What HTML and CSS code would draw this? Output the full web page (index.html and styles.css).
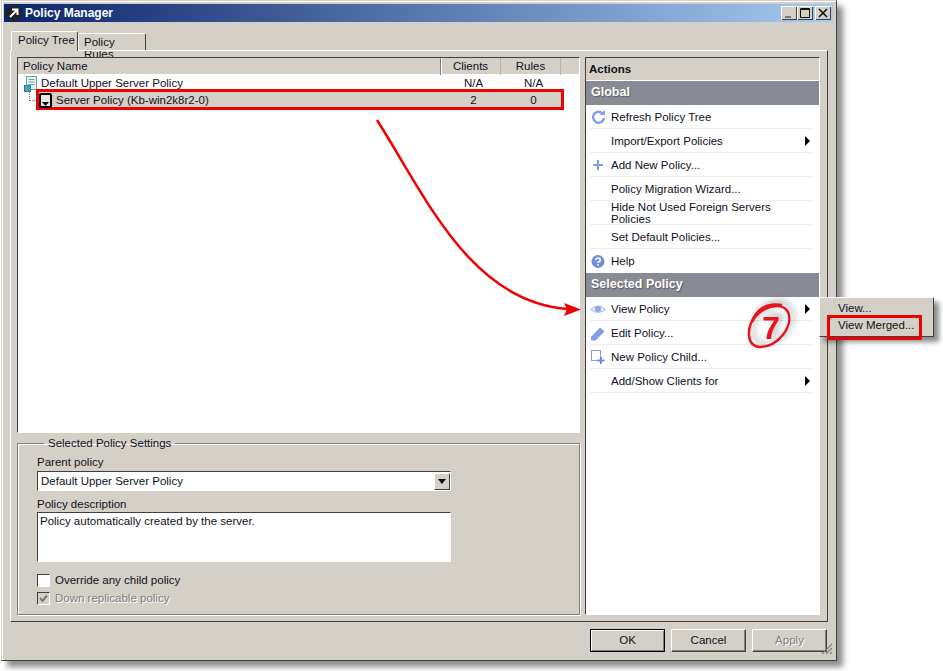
FILE: index.html
```html
<!DOCTYPE html>
<html lang="en">
<head>
    <meta charset="UTF-8">
    <title>Policy Manager</title>
    <link rel="stylesheet" href="styles.css">
</head>
<body>
    <div class="window">
        <!-- Title bar -->
        <div class="titlebar">
            <svg class="title-icon" width="16" height="16" viewBox="0 0 16 16">
                <circle cx="8" cy="8" r="7.5" fill="#222"/>
                <path d="M4 12 L10.5 5.5 M6 4.5 H11.5 V10" fill="none" stroke="#fff" stroke-width="2"/>
            </svg>
            <span class="title-text">Policy Manager</span>
            <div class="title-buttons">
                <div class="title-btn"><svg width="16" height="14" viewBox="0 0 16 14"><rect x="4" y="10" width="6" height="2" fill="#777"/></svg></div>
                <div class="title-btn"><svg width="16" height="14" viewBox="0 0 16 14"><path d="M3.5 2.5 H12.5 V11.5 H3.5 Z M3.5 3.5 H12.5" fill="none" stroke="#111"/></svg></div>
                <div class="title-btn"><svg width="16" height="14" viewBox="0 0 16 14"><path d="M4 3 L12 11 M12 3 L4 11" fill="none" stroke="#111" stroke-width="1.6"/></svg></div>
            </div>
        </div>

        <!-- Tabs -->
        <div class="tabs">
            <div class="tab active">Policy Tree</div>
            <div class="tab">Policy Rules</div>
        </div>

        <div class="tab-panel">
            <div class="left-col">
                <div class="tree">
                    <div class="tree-head">
                        <div class="col-name">Policy Name</div>
                        <div class="col-num">Clients</div>
                        <div class="col-num">Rules</div>
                    </div>
                    <div class="tree-row">
                        <svg class="doc-icon" width="14" height="16" viewBox="0 0 14 16">
                            <rect x="2.5" y="0.5" width="10" height="13" fill="#e6f2f2" stroke="#6aa5a8"/>
                            <path d="M4.5 3.5 H10.5 M4.5 6 H10.5 M4.5 8.5 H10.5" stroke="#6aa5a8"/>
                            <rect x="0.5" y="9.5" width="6" height="6" fill="#4f9fb5" stroke="#2d7f94"/>
                        </svg>
                        <div class="col-name row-name">Default Upper Server Policy</div>
                        <div class="col-num">N/A</div>
                        <div class="col-num">N/A</div>
                    </div>
                    <div class="tree-row child">
                        <div class="tree-dots"></div>
                        <svg class="srv-icon" width="13" height="15" viewBox="0 0 13 15">
                            <rect width="13" height="15" rx="2" fill="#000"/>
                            <rect x="2" y="2" width="9" height="11" fill="#e8e8e8"/>
                            <path d="M3 9 H10 L6.5 13 Z" fill="#000"/>
                        </svg>
                        <div class="child-cells">
                            <div class="col-name child-name">Server Policy (Kb-win2k8r2-0)</div>
                            <div class="col-num">2</div>
                            <div class="col-num">0</div>
                        </div>
                    </div>
                </div>

                <fieldset class="settings">
                    <legend>Selected Policy Settings</legend>
                    <div class="field-label first">Parent policy</div>
                    <div class="combo">
                        <span>Default Upper Server Policy</span>
                        <div class="combo-btn"><svg width="8" height="5" viewBox="0 0 8 5"><path d="M0 0 H8 L4 5 Z" fill="#000"/></svg></div>
                    </div>
                    <div class="field-label">Policy description</div>
                    <div class="memo">Policy automatically created by the server.</div>
                    <div class="check-row">
                        <div class="check"></div>
                        <span>Override any child policy</span>
                    </div>
                    <div class="check-row disabled">
                        <div class="check"><svg width="11" height="11" viewBox="0 0 11 11"><path d="M2 5 L4.5 8 L9 2.5" fill="none" stroke="#777" stroke-width="2"/></svg></div>
                        <span>Down replicable policy</span>
                    </div>
                </fieldset>
            </div>

            <!-- Actions pane -->
            <div class="actions">
                <div class="actions-head">Actions</div>
                <div class="band">Global</div>
                <div class="item">
                    <svg class="item-icon" width="16" height="16" viewBox="0 0 16 16"><path d="M13 5 A5.5 5.5 0 1 0 14 9" fill="none" stroke="#7f9fe8" stroke-width="2.4"/><path d="M9.5 6 H15 V1 Z" fill="#7f9fe8"/></svg>
                    <span>Refresh Policy Tree</span>
                </div>
                <div class="item"><span>Import/Export Policies</span><div class="sub-arrow"></div></div>
                <div class="item">
                    <svg class="item-icon" width="16" height="16" viewBox="0 0 16 16"><path d="M8 3 V13 M3 8 H13" stroke="#7f9fe8" stroke-width="2"/></svg>
                    <span>Add New Policy...</span>
                </div>
                <div class="item"><span>Policy Migration Wizard...</span></div>
                <div class="item"><span>Hide Not Used Foreign Servers Policies</span></div>
                <div class="item"><span>Set Default Policies...</span></div>
                <div class="item last">
                    <svg class="item-icon" width="16" height="16" viewBox="0 0 16 16"><circle cx="8" cy="8.5" r="6.5" fill="#6f8fe0"/><path d="M5.8 7 A2.2 2 0 1 1 8 9 V10" fill="none" stroke="#fff" stroke-width="1.6"/><rect x="7.2" y="11" width="1.6" height="1.6" fill="#fff"/></svg>
                    <span>Help</span>
                </div>
                <div class="band">Selected Policy</div>
                <div class="item">
                    <svg class="item-icon" width="16" height="16" viewBox="0 0 16 16"><path d="M0.5 8.5 Q8 1.5 15.5 8.5 Q8 14.5 0.5 8.5 Z" fill="#dfe6fa" stroke="#a9bcf0"/><circle cx="8" cy="8" r="3" fill="#8ea6e8"/></svg>
                    <span>View Policy</span><div class="sub-arrow"></div>
                </div>
                <div class="item">
                    <svg class="item-icon" width="16" height="16" viewBox="0 0 16 16"><path d="M1 12 L10 2.5 L14.5 6.5 L5.5 15.5 H1 Z" fill="#7f9fe8"/></svg>
                    <span>Edit Policy...</span>
                </div>
                <div class="item">
                    <svg class="item-icon" width="16" height="16" viewBox="0 0 16 16"><rect x="1.5" y="1.5" width="9" height="10" fill="#fff" stroke="#8a9cc8"/><path d="M11 8 V15 M7.5 11.5 H14.5" stroke="#6f8fe0" stroke-width="2"/></svg>
                    <span>New Policy Child...</span>
                </div>
                <div class="item"><span>Add/Show Clients for</span><div class="sub-arrow"></div></div>
            </div>
        </div>

        <div class="footer">
            <div class="btn default">OK</div>
            <div class="btn">Cancel</div>
            <div class="btn disabled">Apply</div>
            <svg class="grip" width="13" height="13" viewBox="0 0 13 13"><path d="M12 2 L2 12 M12 6 L6 12 M12 10 L10 12" stroke="#808080" stroke-width="1.2"/></svg>
        </div>
    </div>

    <!-- Popup submenu -->
    <div class="popup">
        <div class="popup-item">View...</div>
        <div class="popup-item">View Merged...</div>
    </div>

    <!-- Annotations drawn over the screenshot -->
    <div class="mark mark-row"></div>
    <div class="mark mark-menu"></div>
    <svg class="annot" width="943" height="671" viewBox="0 0 943 671">
        <path d="M377 120 C425 195 470 302 568 309" fill="none" stroke="#f00000" stroke-width="2.5"/>
        <path d="M581 309.5 L564 303 L567 309 L564 316 Z" fill="#f00000"/>
        <g class="seven">
            <path d="M752 322 C760 306 782 301 788 312 C794 326 778 347 760 347 C746 346 746 328 756 314 C762 306 772 303 782 305" fill="none" stroke="#e8141c" stroke-width="2.5"/>
            <text x="771" y="339" class="seven-text">7</text>
        </g>
    </svg>
</body>
</html>
```

FILE: styles.css
```css
body {
    margin: 0;
    background: #fff;
    font-family: "Liberation Sans", Arial, sans-serif;
    font-size: 11.5px;
    color: #10101c;
    width: 943px;
    height: 671px;
    position: relative;
    overflow: hidden;
}

.window {
    box-sizing: border-box;
    width: 836px;
    height: 661px;
    margin-left: 1px;
    padding: 3px 3px 0 2px;
    background: #d4d0c8;
    border: 1px solid #d4d0c8;
    border-right-color: #404040;
    border-bottom-color: #404040;
    box-shadow: inset 1px 1px 0 #fff, 6px 6px 6px rgba(0, 0, 0, 0.45);
    display: flex;
    flex-direction: column;
}

/* Title bar */
.titlebar {
    height: 18px;
    flex: none;
    display: flex;
    align-items: center;
    padding: 0 2px;
    background: linear-gradient(90deg, #0a246a, #a6caf0);
    color: #fff;
}

.title-icon {
    margin-right: 3px;
}

.title-text {
    font-weight: bold;
    font-size: 12px;
}

.title-buttons {
    margin-left: auto;
    display: flex;
}

.title-btn {
    box-sizing: border-box;
    width: 16px;
    height: 14px;
    background: #d4d0c8;
    box-shadow: inset 1px 1px 0 #fff, inset -1px -1px 0 #404040;
    display: flex;
}

.title-btn:last-child {
    margin-left: 2px;
}

/* Tabs */
.tabs {
    display: flex;
    align-items: flex-end;
    height: 20px;
    margin: 8px 0 0 7px;
    flex: none;
}

.tab {
    box-sizing: border-box;
    height: 17px;
    width: 68px;
    padding: 2px 0 0 5px;
    border: 1px solid #fff;
    border-bottom: none;
    border-right-color: #404040;
    border-radius: 2px 2px 0 0;
}

.tab.active {
    height: 20px;
    width: 67px;
    padding: 2px 0 0 6px;
    position: relative;
    z-index: 1;
    margin-bottom: -1px;
    background: #d4d0c8;
}

.tab-panel {
    box-sizing: border-box;
    height: 572px;
    margin-left: 6px;
    width: 818px;
    flex: none;
    padding: 6px 7px 6px 6px;
    border: 1px solid #fff;
    border-right-color: #404040;
    border-bottom-color: #404040;
    display: flex;
    gap: 5px;
}

.left-col {
    width: 563px;
    display: flex;
    flex-direction: column;
}

/* Policy tree list */
.tree {
    box-sizing: border-box;
    height: 376px;
    flex: none;
    background: #fff;
    border: 1px solid #fff;
    border-top-color: #404040;
    border-left-color: #404040;
}

.tree-head {
    display: flex;
    height: 17px;
    line-height: 16px;
    background: #d4d0c8;
    box-shadow: inset 0 -1px 0 #fff;
    padding-right: 18px;
    border-right: 0;
}

.tree-head .col-name {
    width: 417px;
    padding-left: 5px;
    border-right: 1px solid #808080;
    box-shadow: 1px 0 0 #fff;
}

.col-num {
    width: 59px;
    flex: none;
    text-align: center;
    border-right: 1px solid #b8b4ac;
}

.tree-row .col-num,
.child-cells .col-num {
    border-right-color: transparent;
}

.tree-row {
    display: flex;
    align-items: center;
    height: 17px;
    line-height: 17px;
}

.doc-icon {
    margin-left: 6px;
    flex: none;
}

.row-name {
    width: 403px;
    padding-left: 3px;
}

.tree-row.child {
    position: relative;
}

.tree-dots {
    width: 9px;
    height: 8px;
    margin: -8px 0 0 11px;
    flex: none;
    border-left: 1px dotted #777;
    border-bottom: 1px dotted #777;
}

.srv-icon {
    margin-left: 0;
    flex: none;
    position: relative;
    z-index: 1;
}

.child-cells {
    display: flex;
    flex: 1;
    margin-left: -13px;
    margin-right: 18px;
    background: #d4d0c8;
}

.child-name {
    width: 388px;
    padding-left: 17px;
}

/* Settings group */
.settings {
    flex: 1;
    margin: 3px 0 0;
    padding: 0 0 0 19px;
    min-width: 0;
    border: 1px solid #808080;
    box-shadow: inset 1px 1px 0 #fff, 1px 1px 0 #fff;
}

.settings legend {
    margin-left: 7px;
    padding: 0 4px;
    line-height: 14px;
}

.field-label {
    height: 14px;
    line-height: 14px;
    margin-top: 6px;
}

.field-label.first {
    margin-top: 5px;
}

.combo {
    box-sizing: border-box;
    width: 414px;
    height: 20px;
    margin-top: 2px;
    padding-left: 3px;
    background: #fff;
    border: 1px solid #fff;
    border-top-color: #404040;
    border-left-color: #404040;
    display: flex;
    align-items: center;
    justify-content: space-between;
}

.combo-btn {
    box-sizing: border-box;
    width: 16px;
    height: 17px;
    background: #d4d0c8;
    border: 1px solid #404040;
    border-top-color: #fff;
    border-left-color: #fff;
    display: flex;
    align-items: center;
    justify-content: center;
}

.memo {
    box-sizing: border-box;
    width: 414px;
    height: 50px;
    margin-top: 1px;
    padding: 1px 2px;
    line-height: 14px;
    background: #fff;
    border: 1px solid #fff;
    border-top-color: #404040;
    border-left-color: #404040;
}

.check-row {
    display: flex;
    align-items: center;
    gap: 5px;
    height: 14px;
    margin-top: 4px;
}

.memo + .check-row {
    margin-top: 11px;
}

.check {
    box-sizing: border-box;
    width: 13px;
    height: 13px;
    background: #fff;
    border: 1px solid #fff;
    border-top-color: #404040;
    border-left-color: #404040;
}

.check-row.disabled {
    color: #808080;
    text-shadow: 1px 1px 0 #fff;
}

.check-row.disabled .check {
    background: #d4d0c8;
}

.check svg {
    display: block;
}

/* Actions pane */
.actions {
    box-sizing: border-box;
    width: 235px;
    background: #fff;
    border: 1px solid #fff;
    border-top-color: #404040;
    border-left-color: #404040;
}

.actions-head {
    height: 22px;
    line-height: 22px;
    padding-left: 3px;
    font-weight: bold;
    background: #d4d0c8;
    border-bottom: 1px solid #fff;
}

.band {
    height: 24px;
    line-height: 23px;
    padding-left: 5px;
    font-size: 12.5px;
    font-weight: bold;
    color: #fff;
    background: #898b94;
    text-shadow: 1px 1px 1px rgba(0, 0, 0, 0.35);
}

.item {
    box-sizing: border-box;
    height: 24px;
    margin: 0 6px 0 4px;
    padding-left: 21px;
    border-bottom: 1px solid #ececec;
    display: flex;
    align-items: center;
    position: relative;
}

.item.last {
    border-bottom: none;
}

.item-icon {
    position: absolute;
    left: 0;
    top: 4px;
}

.sub-arrow {
    margin-left: auto;
    margin-right: 3px;
    width: 0;
    height: 0;
    border-left: 5px solid #000;
    border-top: 5px solid transparent;
    border-bottom: 5px solid transparent;
}

/* Footer buttons */
.footer {
    display: flex;
    justify-content: flex-end;
    gap: 6px;
    padding: 7px 6px 0 0;
    position: relative;
}

.btn {
    box-sizing: border-box;
    width: 75px;
    height: 23px;
    line-height: 20px;
    text-align: center;
    background: #d4d0c8;
    border: 1px solid #fff;
    border-right-color: #404040;
    border-bottom-color: #404040;
    box-shadow: inset -1px -1px 0 #808080;
}

.btn.default {
    border-color: #000;
    box-shadow: inset 1px 1px 0 #fff, inset -1px -1px 0 #808080;
}

.btn.disabled {
    color: #808080;
    text-shadow: 1px 1px 0 #fff;
}

.grip {
    position: absolute;
    right: 0;
    bottom: -3px;
}

/* Popup submenu */
.popup {
    position: absolute;
    left: 819px;
    top: 297px;
    box-sizing: border-box;
    width: 115px;
    height: 40px;
    padding: 2px 0 0 18px;
    background: #d4d0c8;
    border: 1px solid #fff;
    border-right-color: #404040;
    border-bottom-color: #404040;
    box-shadow: 5px 5px 5px rgba(0, 0, 0, 0.45);
}

.popup-item {
    height: 17px;
    line-height: 17px;
}

/* Red annotations */
.mark {
    position: absolute;
    box-sizing: border-box;
    border: 3px solid #f00000;
}

.mark-row {
    left: 36px;
    top: 89px;
    width: 528px;
    height: 21px;
}

.mark-menu {
    left: 827px;
    top: 315px;
    width: 95px;
    height: 25px;
}

.annot {
    position: absolute;
    left: 0;
    top: 0;
    pointer-events: none;
}

.seven {
    filter: drop-shadow(4px -3px 3px rgba(0, 0, 0, 0.35));
}

.seven-text {
    font-family: "Liberation Sans", Arial, sans-serif;
    font-size: 32px;
    font-weight: bold;
    fill: #e8141c;
    text-anchor: middle;
}
```
